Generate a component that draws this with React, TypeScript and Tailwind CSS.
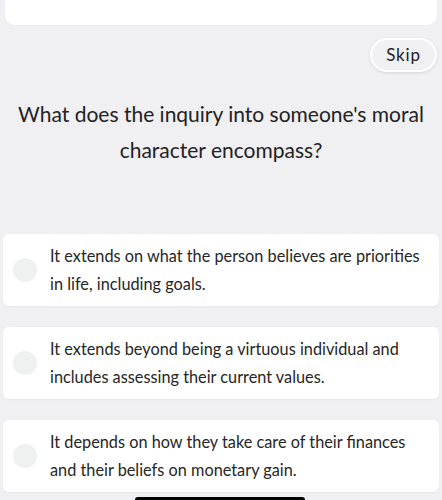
const options = [
  "It extends on what the person believes are priorities in life, including goals.",
  "It extends beyond being a virtuous individual and includes assessing their current values.",
  "It depends on how they take care of their finances and their beliefs on monetary gain.",
];

export default function App() {
  return (
    <div
      className="relative h-[500px] w-[442px] overflow-hidden bg-[#f0eff1] text-[#2a2a2a]"
      style={{ fontFamily: "Lato, 'Open Sans', sans-serif" }}
    >
      <div className="mx-[5px] h-[25px] rounded-b-[10px] bg-white" />

      <div className="mt-[13px] flex justify-end pr-[5px]">
        <button className="h-[34px] w-[67px] rounded-full border-2 border-white bg-[#f1f0f2] text-[17px] tracking-[0.8px] text-[#222] shadow-[0_1px_3px_rgba(0,0,0,0.12)]">
          Skip
        </button>
      </div>

      <h1 className="mt-[24px] whitespace-nowrap text-center text-[21px] leading-[36px] text-[#222]">
        What does the inquiry into someone's moral
        <br />
        character encompass?
      </h1>

      <div className="mt-[66px] flex flex-col gap-[21px] px-[3px]">
        {options.map((o) => (
          <div
            key={o}
            className="flex h-[72px] items-center gap-[13px] rounded-[6px] bg-white pl-[10px] pr-[6px] shadow-[0_1px_2px_rgba(0,0,0,0.04)]"
          >
            <div className="h-[24px] w-[24px] shrink-0 rounded-full bg-[#eff1f1]" />
            <p className="text-[16.3px] leading-[28px] text-[#262626]">{o}</p>
          </div>
        ))}
      </div>

      <div className="absolute bottom-0 left-[135px] h-[3px] w-[170px] rounded-t-full bg-black" />
    </div>
  );
}
